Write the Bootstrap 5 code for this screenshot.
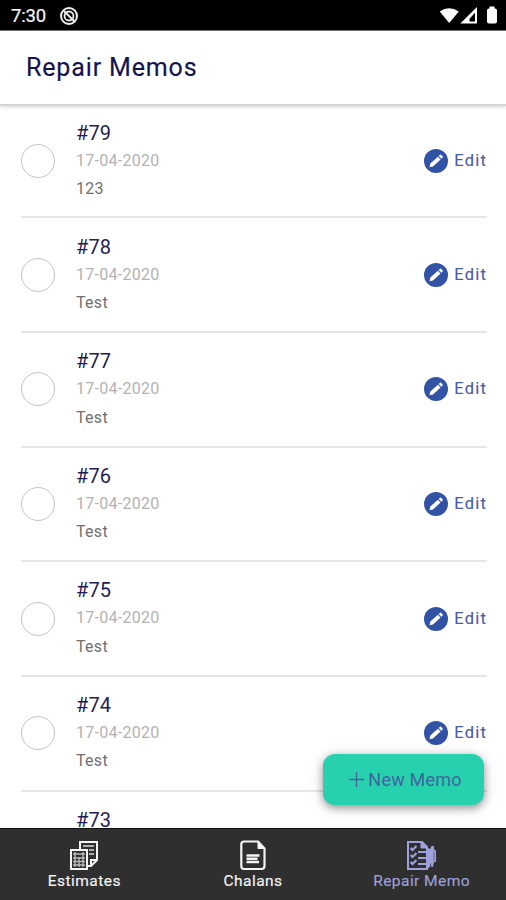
<!DOCTYPE html>
<html lang="en">
<head>
<meta charset="utf-8">
<meta name="viewport" content="width=device-width, initial-scale=1">
<title>Repair Memos</title>
<link rel="stylesheet" href="https://cdn.jsdelivr.net/npm/bootstrap@5.3.0/dist/css/bootstrap.min.css">
<style>
body{font-family:Roboto,"Liberation Sans",sans-serif;background:#fff;height:900px}
.screen{height:900px;width:100%}
.statusbar{height:31px;background:#000;color:#f4f4f4;font-size:18.5px;line-height:20px;padding:2px 9px 0 11px;border-bottom:1px solid #777}
.clock{width:48px;letter-spacing:-.15px;-webkit-text-stroke:.2px}
.appbar{height:75px;padding:0 26px;border-bottom:2px solid #d4d4d4;box-shadow:0 1px 4px rgba(0,0,0,.16);z-index:1}
.appbar h1{font-size:25px;line-height:30px;letter-spacing:.85px;color:#14134d;font-weight:400;-webkit-text-stroke:.15px #14134d}
.memos{padding:0 19px 0 21px}
.memo{height:114.65px;border-bottom:2px solid #e6e6e6}
.memo:first-child{height:112.4px}
.memo:last-child{border:0}
.pick{width:34px;height:34px;border:1.5px solid #c4c4c4;margin-right:21px}
.num{font-size:20px;line-height:28px;color:#1f1d52;letter-spacing:.1px}
.date{font-size:16px;line-height:28.4px;color:#b2b2b2;letter-spacing:.28px}
.note{font-size:16px;line-height:28px;color:#707070;letter-spacing:.3px}
.edit{color:#4a5da6;font-size:16.5px;line-height:24px;letter-spacing:1.2px;gap:6.500px;-webkit-text-stroke:.15px}
.fab{right:22px;bottom:23px;width:161px;height:51px;border-radius:12px;background:#27d1ad;color:#41649f;font-size:18px;letter-spacing:.2px;box-shadow:0 3px 8px rgba(0,0,0,.38),0 2px 18px rgba(0,0,0,.1);padding:0 0 1px 4px}
.tabs{height:72px;background:#2f2f2f;border-top:1px solid #111;color:#f4f4f4;font-size:15.5px;line-height:20px;letter-spacing:.45px}
.tabs a{padding-top:11px;-webkit-text-stroke:.15px}
.tabs .current{color:#9ca0dc}
</style>
<script src="https://cdn.jsdelivr.net/npm/bootstrap@5.3.0/dist/js/bootstrap.bundle.min.js"></script>
</head>
<body>
<svg class="d-none">
  <symbol id="pencil" viewBox="0 0 24 24"><circle cx="12" cy="12" r="12" fill="#3152a5"/><path d="M5.500 18.200l.8-3.600 7.600-6.900 2.700 2.900-7.600 6.900zM14.700 7l1.300-1.200q.7-.5 1.300.1l1.300 1.400q.5.700 0 1.300l-1.200 1.200z" fill="#fff"/></symbol>
</svg>
<div class="screen d-flex flex-column overflow-hidden">
  <div class="statusbar d-flex align-items-center flex-shrink-0">
    <span class="clock">7:30</span>
    <svg width="20" height="20" viewBox="0 0 20 20" fill="none" stroke="#eee"><circle cx="10" cy="10" r="8" stroke-width="2"/><circle cx="10" cy="10" r="4.500" stroke-width="1.800"/><path d="M5 5l11 11" stroke-width="2"/></svg>
    <svg class="ms-auto" width="58" height="20" viewBox="0 0 58 20" fill="#fff"><path d="M.7 5.500Q10 -1 19.800 5.500L10.200 17z"/><path fill-rule="evenodd" d="M38 1V17.500H21.300zM36 6.800l-5.500 6V15.500H36z"/><path d="M50.500 .5h5v2H56q2 0 2 2v11q0 2-2 2h-6q-2 0-2-2V4.500q0-2 2-2h.5z"/></svg>
  </div>
  <header class="appbar d-flex align-items-center flex-shrink-0 bg-white position-relative"><h1 class="m-0">Repair Memos</h1></header>
  <main class="flex-grow-1 overflow-hidden position-relative">
    <div class="memos" id="memos"></div>
    <button class="fab btn border-0 position-absolute d-flex align-items-center justify-content-center"><svg class="me-1" width="15" height="15" viewBox="0 0 15 15" stroke="currentColor" stroke-width="1.300"><path d="M0 7.500h15M7.500 0v15"/></svg>New Memo</button>
  </main>
  <nav class="tabs row g-0 flex-shrink-0 text-center">
    <a class="col-4 d-flex flex-column align-items-center text-reset text-decoration-none">
      <svg width="30" height="31" viewBox="0 0 30 31" fill="none" stroke="currentColor" stroke-width="2"><path d="M11 9V2h17v18l-6 6h-3M28 20h-6v6"/><path d="M14 6h11M20 10h5M20 14h5" stroke-width="1.800" opacity=".65"/><path d="M2 10h16v19H2z"/><path d="M4 14h12M4 18h12M4 21.500h12M4 25h12M6 12v15M10 17v10M14 12v15" stroke-width="1.400" opacity=".7"/></svg>
      <span>Estimates</span></a>
    <a class="col-4 d-flex flex-column align-items-center text-reset text-decoration-none">
      <svg width="26" height="31" viewBox="0 0 26 31" fill="none" stroke="currentColor" stroke-width="2.200" stroke-linejoin="round"><path d="M4 1.500h14l6.500 7V26q0 3-3 3H4q-2.700 0-2.700-3V4.500q0-3 2.700-3z"/><path d="M18 2v6.500h6z" fill="currentColor" stroke-width="1"/><path d="M6.500 15.500h13M6.500 18.700h11M6.500 22h12.500" stroke-width="2.400"/></svg>
      <span>Chalans</span></a>
    <a class="current col-4 d-flex flex-column align-items-center text-decoration-none">
      <svg width="31" height="31" viewBox="0 0 31 31" fill="none" stroke="currentColor" stroke-width="2"><path d="M21 9V7l-5-5H2v27h19v-4"/><path d="M15 1v7h7z" fill="currentColor" stroke-width="1"/><path d="M4.500 8l2 2 4-4M4.500 15l2 2 4-4M4.500 22l2 2 4-4M12 12h9M12 18h9M12 24h9" stroke-width="2.100"/><path d="M20 7l4 2v18l-3 2-1-2z" fill="currentColor" stroke="none"/><path d="M24 9l1.500-3H28v3l2 2v11h-2l-1 5h-1.500L24 23z" fill="currentColor" stroke="none"/><path d="M28 12v9" stroke="#2f2f2f" stroke-width=".5"/></svg>
      <span>Repair Memo</span></a>
  </nav>
</div>
<script>
const notes = {79: "123"};
const list = document.getElementById("memos");
for (let n = 79; n > 73; n--) {
  list.insertAdjacentHTML("beforeend",
    `<div class="memo d-flex align-items-center"><span class="pick rounded-circle flex-shrink-0"></span><div class="flex-grow-1"><div class="num">#${n}</div><div class="date">17-04-2020</div><div class="note">${notes[n] || "Test"}</div></div><a class="edit d-flex align-items-center text-decoration-none"><svg width="24" height="24"><use href="#pencil"/></svg>Edit</a></div>`);
}
list.insertAdjacentHTML("beforeend", `<div class="memo d-flex pt-3"><span class="pick border-0 flex-shrink-0"></span><div class="num lh-sm">#73</div></div>`);
</script>
</body>
</html>
